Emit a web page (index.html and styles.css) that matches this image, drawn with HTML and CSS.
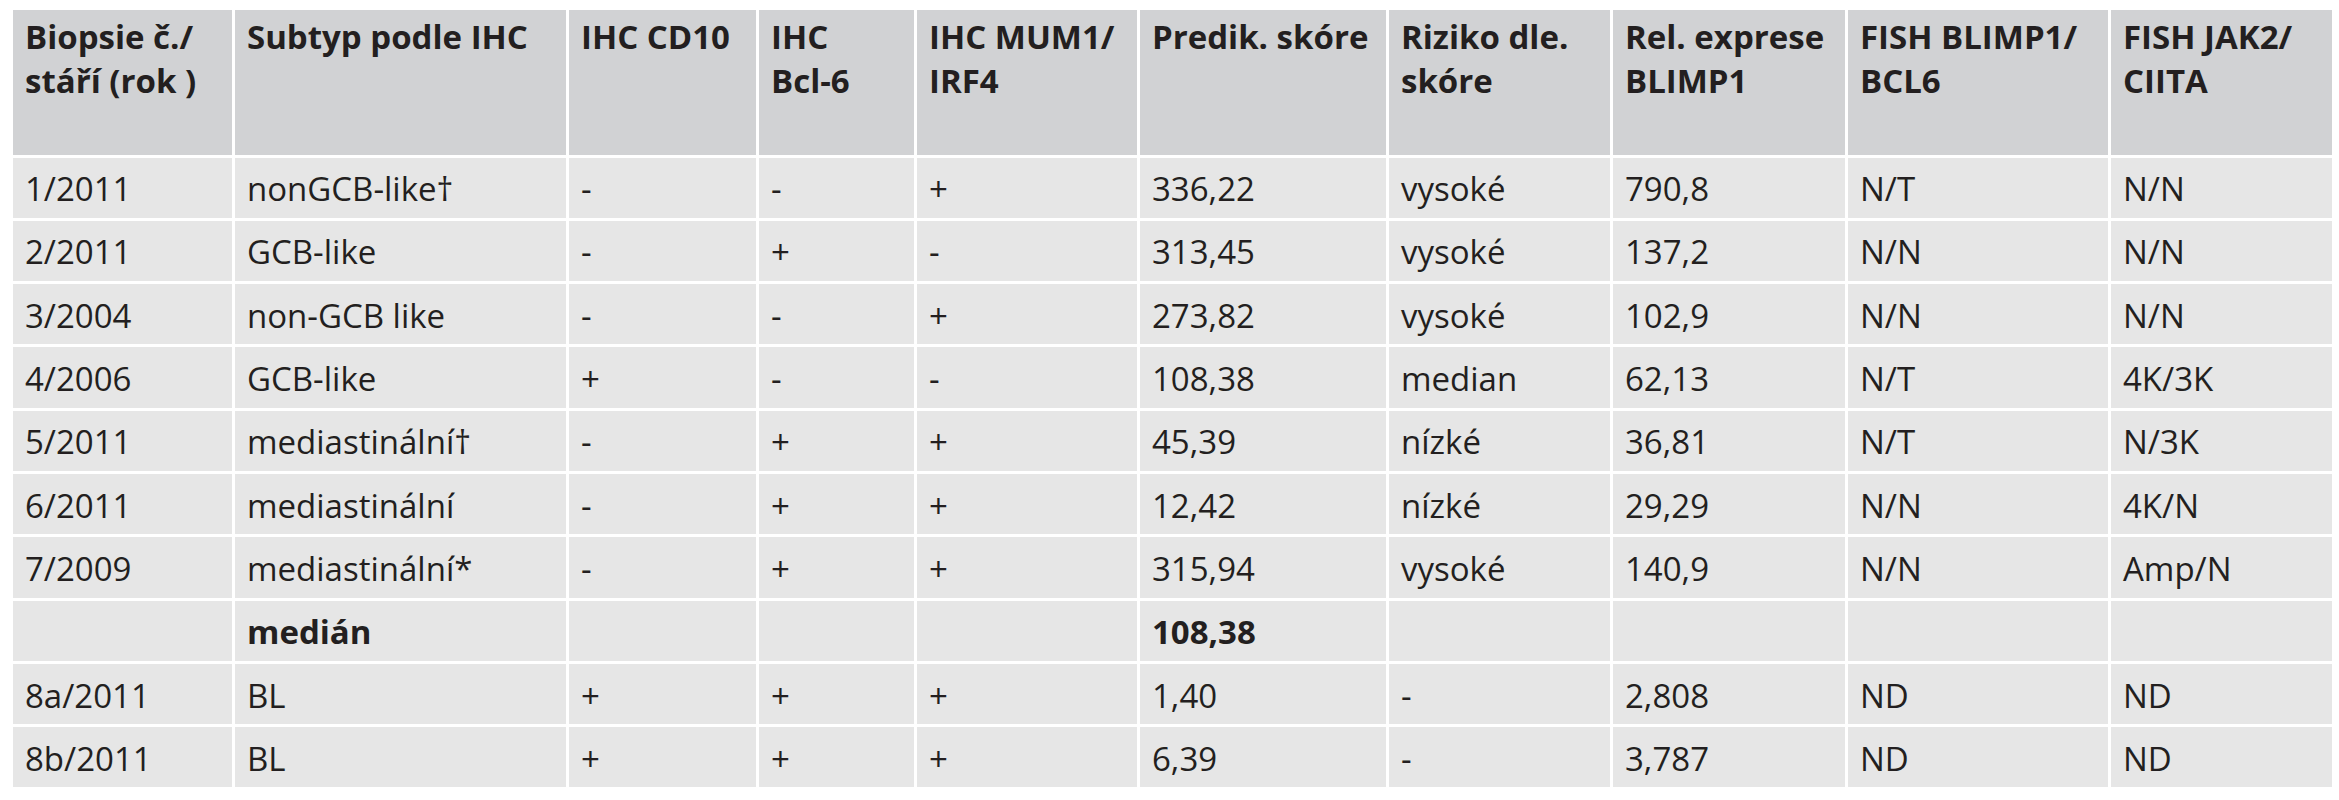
FILE: index.html
```html
<!DOCTYPE html>
<html lang="cs">
<head>
<meta charset="utf-8">
<title>Tabulka</title>
<link rel="stylesheet" href="styles.css">
</head>
<body>
<table class="data">
  <colgroup>
    <col class="c1"><col class="c2"><col class="c3"><col class="c4"><col class="c5">
    <col class="c6"><col class="c7"><col class="c8"><col class="c9"><col class="c10">
  </colgroup>
  <thead>
    <tr>
      <th>Biopsie č./<br>stáří (rok )</th>
      <th>Subtyp podle IHC</th>
      <th>IHC CD10</th>
      <th>IHC<br>Bcl-6</th>
      <th>IHC MUM1/<br>IRF4</th>
      <th>Predik. skóre</th>
      <th>Riziko dle.<br>skóre</th>
      <th>Rel. exprese<br>BLIMP1</th>
      <th>FISH BLIMP1/<br>BCL6</th>
      <th>FISH JAK2/<br>CIITA</th>
    </tr>
  </thead>
  <tbody>
    <tr><td>1/2011</td><td>nonGCB-like†</td><td>-</td><td>-</td><td>+</td><td>336,22</td><td>vysoké</td><td>790,8</td><td>N/T</td><td>N/N</td></tr>
    <tr><td>2/2011</td><td>GCB-like</td><td>-</td><td>+</td><td>-</td><td>313,45</td><td>vysoké</td><td>137,2</td><td>N/N</td><td>N/N</td></tr>
    <tr><td>3/2004</td><td>non-GCB like</td><td>-</td><td>-</td><td>+</td><td>273,82</td><td>vysoké</td><td>102,9</td><td>N/N</td><td>N/N</td></tr>
    <tr><td>4/2006</td><td>GCB-like</td><td>+</td><td>-</td><td>-</td><td>108,38</td><td>median</td><td>62,13</td><td>N/T</td><td>4K/3K</td></tr>
    <tr><td>5/2011</td><td>mediastinální†</td><td>-</td><td>+</td><td>+</td><td>45,39</td><td>nízké</td><td>36,81</td><td>N/T</td><td>N/3K</td></tr>
    <tr><td>6/2011</td><td>mediastinální</td><td>-</td><td>+</td><td>+</td><td>12,42</td><td>nízké</td><td>29,29</td><td>N/N</td><td>4K/N</td></tr>
    <tr><td>7/2009</td><td>mediastinální*</td><td>-</td><td>+</td><td>+</td><td>315,94</td><td>vysoké</td><td>140,9</td><td>N/N</td><td>Amp/N</td></tr>
    <tr class="sum"><td></td><td>medián</td><td></td><td></td><td></td><td>108,38</td><td></td><td></td><td></td><td></td></tr>
    <tr><td>8a/2011</td><td>BL</td><td>+</td><td>+</td><td>+</td><td>1,40</td><td>-</td><td>2,808</td><td>ND</td><td>ND</td></tr>
    <tr><td>8b/2011</td><td>BL</td><td>+</td><td>+</td><td>+</td><td>6,39</td><td>-</td><td>3,787</td><td>ND</td><td>ND</td></tr>
  </tbody>
</table>
</body>
</html>
```

FILE: styles.css
```css
html, body {
  margin: 0;
  padding: 0;
  background: #ffffff;
}

body {
  font-family: "Open Sans", "Noto Sans", "DejaVu Sans", sans-serif;
  color: #231f20;
}

.data {
  border-collapse: separate;
  border-spacing: 3px;
  table-layout: fixed;
  margin: 7px 0 0 10px;
  width: 2325px;
}

.c1 { width: 219px; }
.c2 { width: 331px; }
.c3 { width: 187px; }
.c4 { width: 155px; }
.c5 { width: 220px; }
.c6 { width: 246px; }
.c7 { width: 221px; }
.c8 { width: 232px; }
.c9 { width: 260px; }
.c10 { width: 221px; }

.data th,
.data td {
  padding: 0 0 0 12px;
  text-align: left;
  white-space: nowrap;
  overflow: hidden;
}

.data th {
  background: #d1d2d4;
  font-size: 33px;
  font-weight: 680;
  font-stretch: 97%;
  line-height: 44px;
  height: 139.5px;
  padding-top: 5px;
  vertical-align: top;
}

.data td {
  background: #e6e6e6;
  font-size: 33px;
  font-weight: 400;
  font-stretch: 95%;
  line-height: 40px;
  height: 57.3px;
  padding-top: 3px;
  vertical-align: middle;
}

.data .sum td {
  font-weight: 700;
}
```
